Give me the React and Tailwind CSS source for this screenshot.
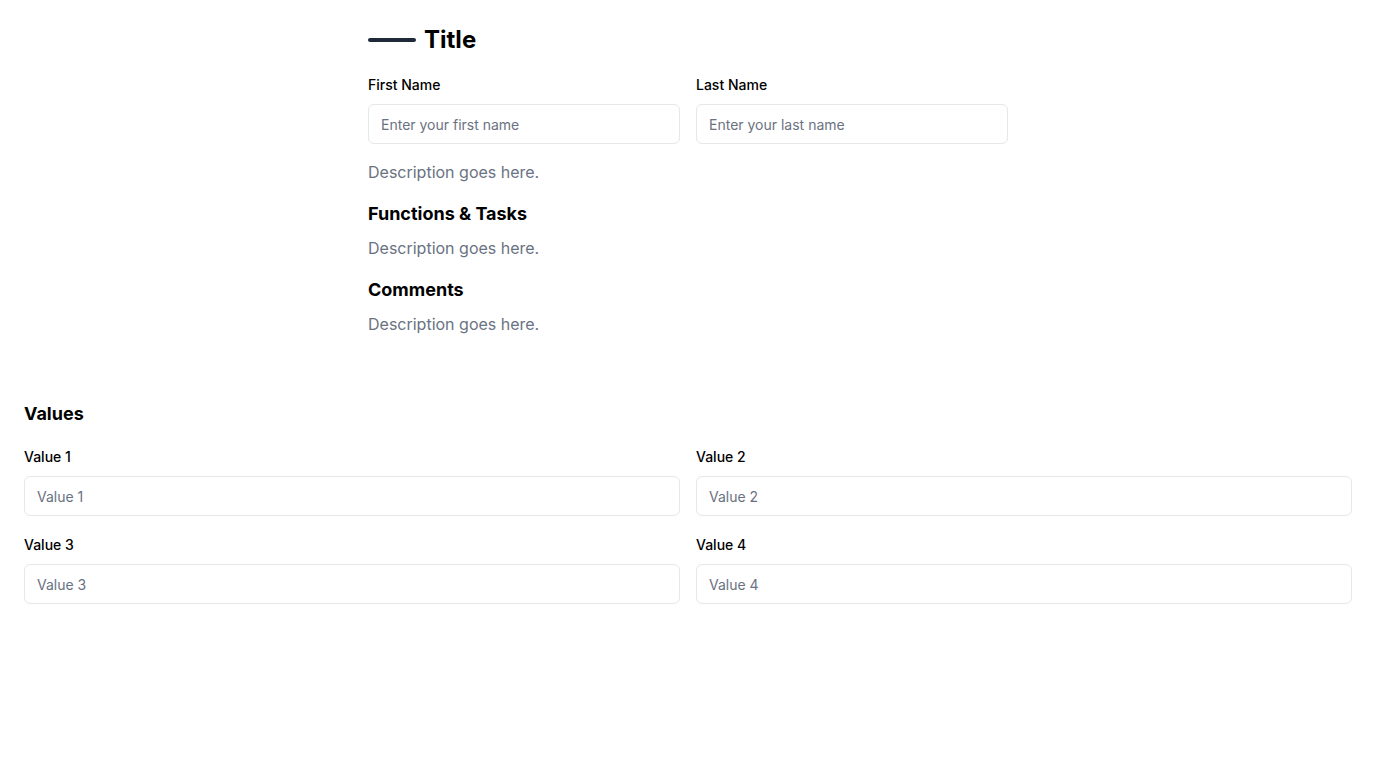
import React from 'react';

function Field({ label, placeholder }) {
  return (
    <div className="flex flex-col">
      <label className="text-sm font-medium leading-[22px] text-black">{label}</label>
      <input
        type="text"
        placeholder={placeholder}
        className="mt-2 h-10 w-full rounded-md border border-gray-200 bg-white px-3 text-sm text-gray-900 placeholder:text-gray-500 outline-none"
      />
    </div>
  );
}

export default function App() {
  return (
    <div className="min-h-screen bg-white" style={{ fontFamily: 'Inter, "Noto Sans", sans-serif' }}>
      <div className="mx-auto max-w-[640px] pt-6">
        <div className="flex items-center gap-2">
          <div className="h-1 w-12 rounded-full bg-gray-800" />
          <h1 className="text-2xl font-bold leading-8 text-black">Title</h1>
        </div>

        <div className="mt-[18px] grid grid-cols-2 gap-4">
          <Field label="First Name" placeholder="Enter your first name" />
          <Field label="Last Name" placeholder="Enter your last name" />
        </div>

        <p className="mt-4 text-base leading-6 text-gray-500">Description goes here.</p>

        <h2 className="mt-4 text-lg font-bold leading-7 text-black">Functions &amp; Tasks</h2>
        <p className="mt-2 text-base leading-6 text-gray-500">Description goes here.</p>

        <h2 className="mt-4 text-lg font-bold leading-7 text-black">Comments</h2>
        <p className="mt-2 text-base leading-6 text-gray-500">Description goes here.</p>
      </div>

      <div className="mt-16 px-6">
        <h2 className="text-lg font-bold leading-7 text-black">Values</h2>
        <div className="mt-[18px] grid grid-cols-2 gap-x-4 gap-y-[18px]">
          <Field label="Value 1" placeholder="Value 1" />
          <Field label="Value 2" placeholder="Value 2" />
          <Field label="Value 3" placeholder="Value 3" />
          <Field label="Value 4" placeholder="Value 4" />
        </div>
      </div>
    </div>
  );
}
